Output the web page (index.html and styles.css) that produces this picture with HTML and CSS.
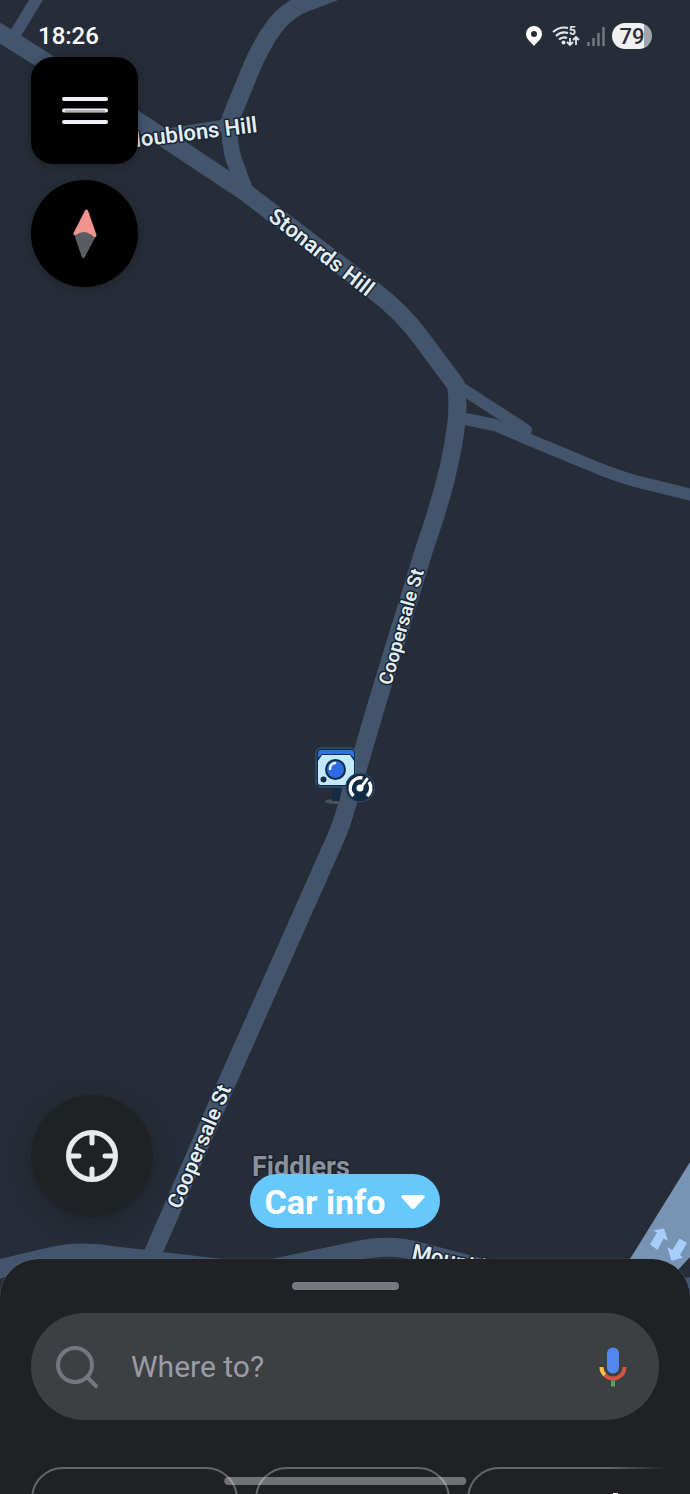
FILE: index.html
```html
<!DOCTYPE html>
<html lang="en">

<head>
    <meta charset="UTF-8">
    <meta name="viewport" content="width=device-width, initial-scale=1.0">
    <title>Map</title>
    <link rel="stylesheet" href="styles.css">
</head>

<body>
    <div class="app">
        <svg class="map" viewBox="0 0 690 1494" preserveAspectRatio="xMidYMin slice" role="img" aria-label="Map">
            <!-- roads -->
            <g class="roads">
                <path class="main-road" d="M-10 27 L0 33 L43 60 L138 121 L245 192 L373 290 Q402 312 421 338 L456 385 Q459 405 456 426 Q451 467 434 520 L424 550 L378 700 L345 812 Q340 830 329 853 L228 1080 L150 1260" />
                <path class="main-road" d="M350 -14 L310 1 Q286 9 272 30 Q262 44 253 64 L230 120" />
                <path class="side-road" d="M229 118 Q229 145 234 160 L245 190" />
                <path class="lane" d="M165 135 L228 125" />
                <path class="lane" d="M39 -5 L14 36" />
                <path class="lane round" d="M461 388 L526 430" />
                <path class="lane" d="M460 418 L495 425 L530 440 L600 469 Q615 475 635 481 L700 497" />
                <path class="wide-road" d="M-5 1270 L45 1258 Q80 1249 115 1256 L225 1269 L270 1269 L355 1251 Q390 1243 420 1252 L500 1273" />
                <path class="main-road" d="M660 1290 L700 1285" />
            </g>
            <path class="motorway" d="M690 1162 L622 1272 L650 1300 L690 1257 Z" />
            <path class="arrow" d="M650 1244.500 L657 1232.500 L653.500 1230.500 L664 1228.500 L668 1241 L663.500 1238.500 L657.500 1250 Z" />
            <path class="arrow" d="M679.500 1238.500 L687 1243 L680 1255 L683 1257.500 L671.500 1261 L667.500 1247.500 L672.500 1250 Z" />

            <!-- street names -->
            <g class="labels">
                <text font-size="22" text-anchor="end" transform="translate(258 132) rotate(-7)">Houblons Hill</text>
                <text font-size="22" transform="translate(267 219) rotate(38)">Stonards Hill</text>
                <text font-size="19" transform="translate(391 686) rotate(-74)">Coopersale St</text>
                <text font-size="21" transform="translate(180 1210) rotate(-67)">Coopersale St</text>
                <text font-size="22" transform="translate(411 1259) rotate(12)">Mount Rd</text>
                <text class="place" font-size="27" x="252" y="1176">Fiddlers</text>
            </g>

            <!-- speed camera -->
            <g>
                <ellipse cx="336" cy="801.500" rx="11" ry="2.500" fill="#4a5260" />
                <path d="M330 785h12v4h-2v12h-8v-12h-2z" fill="#142c46" />
                <rect x="316" y="748" width="39.500" height="39" rx="5" fill="#142c46" stroke="#3d6584" />
                <path d="M318 758v-5q0-3 3-3h30q3 0 3 3v5l-4-4h-28z" fill="#2f74dc" />
                <path d="M322 755h28l4 6v21q0 3-3 3h-30q-3 0-3-3v-21z" fill="#c3e9ff" />
                <circle cx="335.500" cy="769.500" r="9.500" fill="#2d6be0" stroke="#142c46" stroke-width="2" />
                <path d="M330 769q0-5 5-6" fill="none" stroke="#e6f7ff" stroke-width="2.500" stroke-linecap="round" />
                <circle cx="323.500" cy="779.500" r="3" fill="#142c46" />
                <circle cx="360" cy="787.500" r="14.500" fill="#132a43" stroke="#32506a" />
                <path d="M353.500 796a10.500 10.500 0 0 1 9-18M369 782a10.500 10.500 0 0 1-2 14" fill="none" stroke="#fff" stroke-width="3.500" />
                <path d="M361 787.500l6-8.500" stroke="#fff" stroke-width="3" stroke-linecap="round" />
                <circle cx="360" cy="788" r="3.500" fill="#fff" />
            </g>
        </svg>

        <header class="status">
            <time>18:26</time>
            <div class="status-icons">
                <svg width="16" height="20" viewBox="0 0 16 20" aria-hidden="true">
                    <path d="M8 0a8 8 0 0 0-8 8c0 5 5 8 8 12 3-4 8-7 8-12a8 8 0 0 0-8-8zm0 5a3 3 0 1 1 0 6 3 3 0 0 1 0-6z" fill="#fff" />
                </svg>
                <svg width="28" height="22" viewBox="0 0 28 22" aria-hidden="true">
                    <g fill="none" stroke="#e4e6e9" stroke-width="2.200">
                        <path d="M1 7q7-6 15-4M4 11q5-5 12-3M7 14.500q4-3.500 8-1.500" />
                        <path d="M18 13v7m-3-3l3 3 3-3M24 20v-8m-3 3l3-3 3 3" stroke-width="1.800" />
                    </g>
                    <circle cx="11.500" cy="17.500" r="2" fill="#e4e6e9" />
                    <text class="band" x="17" y="10">5</text>
                </svg>
                <svg width="18" height="19" viewBox="0 0 18 19" aria-hidden="true">
                    <path d="M1.500 19v-4M6.500 19v-8M11.500 19v-13M16.500 19v-19" stroke="#747982" stroke-width="2.400" />
                </svg>
                <span class="battery">79</span>
            </div>
        </header>

        <main class="overlay">
            <div class="controls">
                <button type="button" class="tool menu" aria-label="Menu">
                    <svg width="46" height="28" viewBox="0 0 46 28">
                        <path d="M2 2h42M2 13.500h42M2 25h42" stroke="#f0f0f6" stroke-width="4" stroke-linecap="round" />
                        <path d="M3 14h40" stroke="#77777b" />
                    </svg>
                </button>
                <button type="button" class="tool compass" aria-label="Compass">
                    <svg width="24" height="50" viewBox="0 0 24 50">
                        <path d="M1 25L9 48.500q1 1.500 2.500 0L23 27 12 20z" fill="#595c60" />
                        <path d="M12 1.500q1.500-2 3 0L23.500 26q0 3-3 1.500-9-8-17-2-3.500 1.500-3-1.500z" fill="#f19490" />
                    </svg>
                </button>
            </div>
            <div class="map-footer">
                <button type="button" class="locate" aria-label="My location">
                    <svg width="52" height="52" viewBox="0 0 52 52" fill="none" stroke="#e8e9eb" stroke-width="5">
                        <circle cx="26" cy="26" r="23.500" />
                        <path d="M26 4v9M26 39v9M4 26h9M39 26h9" stroke-linecap="round" />
                    </svg>
                </button>
                <button type="button" class="car-info">Car info
                    <svg width="24" height="14" viewBox="0 0 24 14">
                        <path d="M2 0h20q3 1 1 3L14 13q-2 2-4 0L1 3q-2-2 1-3z" fill="#fff" />
                    </svg>
                </button>
            </div>
        </main>

        <section class="sheet">
            <div class="handle"></div>
            <form class="search">
                <svg width="44" height="44" viewBox="0 0 44 44" fill="none" stroke="#74777f" stroke-width="4" aria-hidden="true">
                    <circle cx="20" cy="20" r="17" />
                    <path d="M32 32l9 9" stroke-linecap="round" />
                </svg>
                <input type="text" placeholder="Where to?" aria-label="Where to?">
                <button type="button" class="voice" aria-label="Voice search">
                    <svg width="28" height="40" viewBox="0 0 28 40" fill="none">
                        <rect x="8" y="0.500" width="12" height="26" rx="6" fill="#5386ee" />
                        <path d="M2.500 20a11.500 11.500 0 0 0 3.400 8.100" stroke="#f8c04b" stroke-width="4" />
                        <path d="M5.900 28.100A11.500 11.500 0 0 0 25.500 20" stroke="#d65343" stroke-width="4" />
                        <path d="M14 33.500v6" stroke="#55a35c" stroke-width="4" />
                    </svg>
                </button>
            </form>
            <nav class="shortcuts">
                <button type="button" class="shortcut home" aria-label="Home"></button>
                <button type="button" class="shortcut work" aria-label="Work"></button>
                <button type="button" class="shortcut new" aria-label="New">
                    <svg width="5" height="24" viewBox="0 0 5 24">
                        <path d="M0 0h5v24h-5z" fill="#fff" />
                    </svg>
                </button>
            </nav>
        </section>
        <div class="gesture-bar"></div>
    </div>
</body>

</html>
```
FILE: styles.css
```css
* {
    box-sizing: border-box;
}

body {
    margin: 0;
    background-color: #272d38;
    font-family: Roboto, "Liberation Sans", sans-serif;
}

button {
    display: flex;
    align-items: center;
    justify-content: center;
    padding: 0;
    border: none;
    cursor: pointer;
}

.app {
    position: relative;
    display: flex;
    flex-direction: column;
    height: 100vh;
    overflow: hidden;
}

/* map */
.map {
    position: absolute;
    top: 0;
    left: 0;
    width: 100%;
    height: 100%;
}

.roads path {
    fill: none;
    stroke: #43556d;
    stroke-linejoin: round;
}

.roads .main-road {
    stroke-width: 18;
}

.roads .wide-road {
    stroke-width: 19;
}

.roads .side-road {
    stroke-width: 16;
}

.roads .lane {
    stroke-width: 12;
}

.roads .round {
    stroke-linecap: round;
}

.motorway {
    fill: #7893b4;
}

.arrow {
    fill: #a5cffa;
}

.labels text {
    fill: #e2eef2;
    stroke: #182231;
    stroke-width: 3px;
    stroke-linejoin: round;
    paint-order: stroke;
    font-weight: 600;
}

.labels .place {
    fill: #8b909b;
    font-weight: 700;
}

/* status bar */
.status {
    position: relative;
    display: flex;
    align-items: center;
    justify-content: space-between;
    padding: 22px 38px 7px;
    color: #fff;
    font-size: 24px;
    font-weight: 500;
    line-height: 28px;
}

.status-icons {
    display: flex;
    align-items: center;
    gap: 7px;
}

.status-icons svg:first-child {
    margin-right: 3px;
}

.band {
    fill: #e4e6e9;
    font-size: 12px;
    font-weight: 700;
}

.battery {
    width: 40px;
    height: 26px;
    border-radius: 13px;
    background: linear-gradient(90deg, #f0f0f2 79%, #a2a5ab 79%);
    color: #282d39;
    font-size: 22px;
    line-height: 28px;
    text-align: center;
}

/* buttons over the map */
.overlay {
    position: relative;
    flex-grow: 1;
    display: flex;
    flex-direction: column;
    justify-content: space-between;
    padding: 0 31px;
}

.controls {
    display: flex;
    flex-direction: column;
    gap: 16px;
}

.tool {
    width: 107px;
    height: 107px;
    background-color: #000;
    box-shadow: 0 2px 10px rgba(0, 0, 0, .3);
}

.menu {
    border-radius: 22px;
}

.compass {
    border-radius: 50%;
}

.map-footer {
    display: grid;
    grid-template-columns: 1fr auto 1fr;
    align-items: end;
    padding-bottom: 31px;
}

.locate {
    width: 122px;
    height: 122px;
    margin-bottom: 11px;
    border-radius: 50%;
    background-color: #202124;
    box-shadow: 0 6px 24px rgba(0, 0, 0, .25);
}

.car-info {
    gap: 16px;
    height: 54px;
    padding: 2px 15px 0;
    border-radius: 27px;
    background-color: #67c8fb;
    color: #fff;
    font-family: inherit;
    font-size: 34px;
    font-weight: 700;
}

/* bottom sheet */
.sheet {
    position: relative;
    flex: 0 0 235px;
    padding: 23px 31px 0;
    border-radius: 38px 38px 0 0;
    background-color: #202124;
    box-shadow: 0 0 1px #8694a5;
    overflow: hidden;
}

.handle {
    width: 107px;
    height: 8px;
    margin: 0 auto 23px;
    border-radius: 4px;
    background-color: #777880;
}

.search {
    display: flex;
    align-items: center;
    height: 107px;
    padding: 0 32px 0 24px;
    border-radius: 54px;
    background-color: #3c4043;
}

.search input {
    flex-grow: 1;
    min-width: 0;
    height: 60px;
    padding: 0 32px;
    border: none;
    outline: none;
    background: none;
    color: #e8eaed;
    font-family: inherit;
    font-size: 30px;
}

.search input::placeholder {
    color: #9a9ca5;
    opacity: 1;
}

.voice {
    background: none;
}

.shortcuts {
    display: flex;
    gap: 17px;
    margin-top: 47px;
    margin-right: -16px;
    -webkit-mask-image: linear-gradient(90deg, #000 90%, transparent 99%);
    mask-image: linear-gradient(90deg, #000 90%, transparent 99%);
}

.shortcut {
    flex: none;
    height: 76px;
    border: 2px solid #636569;
    border-radius: 32px;
    background: none;
}

.home {
    width: 207px;
}

.work {
    width: 195px;
}

.new {
    width: 297px;
}

.gesture-bar {
    position: absolute;
    bottom: 9px;
    left: 50%;
    width: 35%;
    height: 8px;
    border-radius: 4px;
    background-color: rgba(255, 255, 255, .36);
    transform: translateX(-50%);
}
```
